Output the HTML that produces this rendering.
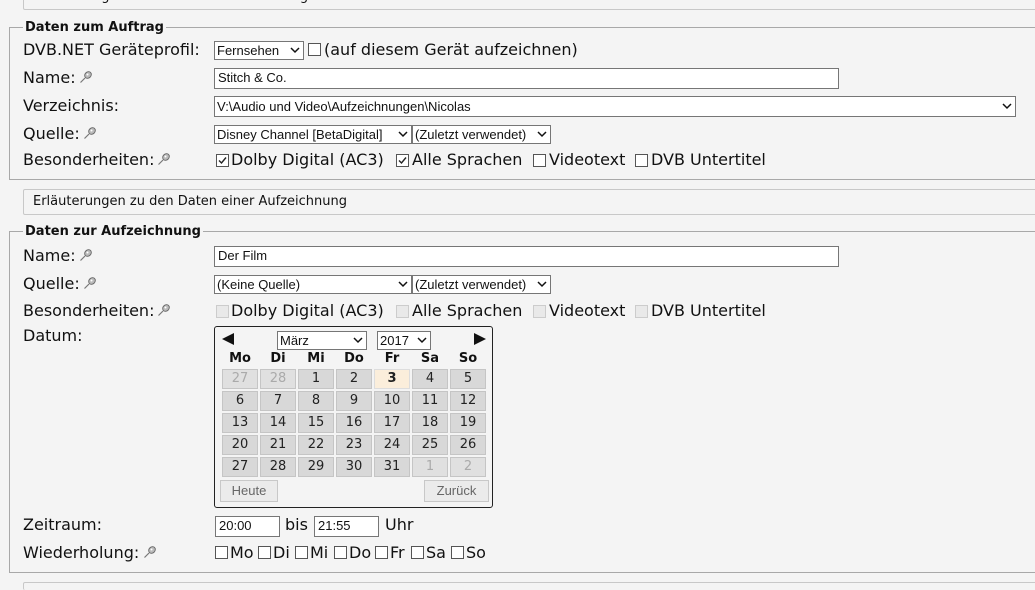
<!DOCTYPE html>
<html style="overflow:hidden;width:1035px;height:590px"><head><meta charset="utf-8"><style>
body{margin:0;width:1035px;height:590px;background:#f4f4f4;font-family:"DejaVu Sans",Verdana,sans-serif;font-size:16px;color:#111;position:relative;overflow:hidden}
.a{position:absolute;white-space:nowrap}
.t{position:absolute;white-space:nowrap;line-height:20px}
.box{position:absolute;border:1px solid #c8c8c8;background:#f4f4f4;border-radius:2px;font-size:13px;line-height:24px;padding-left:9px;box-sizing:border-box}
.fs{position:absolute;border:1px solid #a8a8a8;border-right:none;box-sizing:border-box}
.lg{position:absolute;font-weight:bold;font-size:13px;background:#f4f4f4;padding:0 2px;line-height:16px}
.in{position:absolute;background:#fff;border:1px solid #767676;box-sizing:border-box;font-family:"Liberation Sans",Arial,sans-serif;font-size:13px;line-height:18px;padding-left:3px}
.sel{position:absolute;background:#fff;border:1px solid #767676;box-sizing:border-box;font-family:"Liberation Sans",Arial,sans-serif;font-size:13px;line-height:17px;padding-left:2px;overflow:hidden}
.sel svg{position:absolute;right:3px;top:5px}
.cb{position:absolute;width:11px;height:11px;border:1px solid #555;background:#fff}
.cb.d{border-color:#ccc;background:#e9e9e9}
.cb svg{position:absolute;left:0;top:0}
.pin{position:absolute}
.cell{position:absolute;width:36px;height:20px;box-sizing:border-box;border:1px solid #c5c5c5;background:#d8d8d8;font-size:13px;text-align:center;line-height:18px;color:#222}
.cell.o{color:#aaa;background:#e0e0e0}
.cell.h{background:#fbeedb;border-color:#ddd;font-weight:bold}
.dn{position:absolute;width:36px;text-align:center;font-weight:bold;font-size:13px;line-height:16px}
.btn{position:absolute;height:22px;box-sizing:border-box;border:1px solid #c8c8c8;background:#ebebeb;font-family:"Liberation Sans",Arial,sans-serif;font-size:13px;color:#666;line-height:20px;text-align:center}
</style></head><body>
<svg width="0" height="0" style="position:absolute"><defs>
<symbol id="pin" viewBox="0 0 14 14"><line x1="1.5" y1="12.5" x2="6" y2="8" stroke="#777" stroke-width="1.2"/><ellipse cx="9" cy="5" rx="3.6" ry="3" transform="rotate(-45 9 5)" fill="#bbb" stroke="#666" stroke-width="0.9"/><circle cx="8.5" cy="4.5" r="1" fill="#fff"/></symbol>
<symbol id="chev" viewBox="0 0 10 7"><polyline points="1,1 5,5 9,1" fill="none" stroke="#111" stroke-width="1.5"/></symbol>
<symbol id="chk" viewBox="0 0 11 11"><polyline points="2,5.5 4.5,8 9,2.5" fill="none" stroke="#222" stroke-width="1.4"/></symbol>
</defs></svg>

<div class="box" style="left:23px;top:-16px;width:1020px;height:26px">Erläuterungen zu den Daten eines Auftrags</div>

<div class="fs" style="left:9px;top:27px;width:1030px;height:153px"></div>
<div class="lg" style="left:23px;top:20px">Daten zum Auftrag</div>
<div class="t" style="left:23px;top:40px">DVB.NET Geräteprofil:</div>
<div class="sel" style="left:214px;top:41px;width:90px;height:19px">Fernsehen<svg width="10" height="7"><use href="#chev"/></svg></div>
<div class="cb" style="left:308px;top:43px"></div>
<div class="t" style="left:324px;top:40px">(auf diesem Gerät aufzeichnen)</div>

<div class="t" style="left:23px;top:68px">Name:</div><svg class="pin" style="left:79px;top:70px" width="14" height="14"><use href="#pin"/></svg>
<div class="in" style="left:214px;top:68px;width:625px;height:21px">Stitch &amp; Co.</div>

<div class="t" style="left:23px;top:96px">Verzeichnis:</div>
<div class="sel" style="left:214px;top:96px;width:802px;height:21px;line-height:19px">V:\Audio und Video\Aufzeichnungen\Nicolas<svg width="10" height="7" style="top:6px"><use href="#chev"/></svg></div>

<div class="t" style="left:23px;top:124px">Quelle:</div><svg class="pin" style="left:83px;top:126px" width="14" height="14"><use href="#pin"/></svg>
<div class="sel" style="left:214px;top:125px;width:198px;height:19px">Disney Channel [BetaDigital]<svg width="10" height="7"><use href="#chev"/></svg></div>
<div class="sel" style="left:412px;top:125px;width:139px;height:19px">(Zuletzt verwendet)<svg width="10" height="7"><use href="#chev"/></svg></div>

<div class="t" style="left:23px;top:150px">Besonderheiten:</div><svg class="pin" style="left:157px;top:152px" width="14" height="14"><use href="#pin"/></svg>
<div class="cb" style="left:216px;top:154px"><svg width="11" height="11"><use href="#chk"/></svg></div>
<div class="t" style="left:231px;top:150px">Dolby Digital (AC3)</div>
<div class="cb" style="left:396px;top:154px"><svg width="11" height="11"><use href="#chk"/></svg></div>
<div class="t" style="left:412px;top:150px">Alle Sprachen</div>
<div class="cb" style="left:533px;top:154px"></div>
<div class="t" style="left:549px;top:150px">Videotext</div>
<div class="cb" style="left:635px;top:154px"></div>
<div class="t" style="left:651px;top:150px">DVB Untertitel</div>

<div class="box" style="left:23px;top:189px;width:1020px;height:26px">Erläuterungen zu den Daten einer Aufzeichnung</div>

<div class="fs" style="left:9px;top:231px;width:1030px;height:342px"></div>
<div class="lg" style="left:23px;top:224px">Daten zur Aufzeichnung</div>

<div class="t" style="left:23px;top:246px">Name:</div><svg class="pin" style="left:79px;top:248px" width="14" height="14"><use href="#pin"/></svg>
<div class="in" style="left:214px;top:246px;width:625px;height:21px">Der Film</div>

<div class="t" style="left:23px;top:274px">Quelle:</div><svg class="pin" style="left:83px;top:276px" width="14" height="14"><use href="#pin"/></svg>
<div class="sel" style="left:214px;top:275px;width:198px;height:19px">(Keine Quelle)<svg width="10" height="7"><use href="#chev"/></svg></div>
<div class="sel" style="left:412px;top:275px;width:139px;height:19px">(Zuletzt verwendet)<svg width="10" height="7"><use href="#chev"/></svg></div>

<div class="t" style="left:23px;top:301px">Besonderheiten:</div><svg class="pin" style="left:157px;top:303px" width="14" height="14"><use href="#pin"/></svg>
<div class="cb d" style="left:216px;top:305px"></div>
<div class="t" style="left:231px;top:301px">Dolby Digital (AC3)</div>
<div class="cb d" style="left:396px;top:305px"></div>
<div class="t" style="left:412px;top:301px">Alle Sprachen</div>
<div class="cb d" style="left:533px;top:305px"></div>
<div class="t" style="left:549px;top:301px">Videotext</div>
<div class="cb d" style="left:635px;top:305px"></div>
<div class="t" style="left:651px;top:301px">DVB Untertitel</div>

<div class="t" style="left:23px;top:326px">Datum:</div>

<div class="a" style="left:214px;top:326px;width:279px;height:182px;box-sizing:border-box;border:1px solid #222;border-radius:3px;background:#f4f4f4"></div>
<svg class="a" style="left:221px;top:332px" width="14" height="14"><polygon points="1,7 13,1 13,13" fill="#111"/></svg>
<svg class="a" style="left:473px;top:332px" width="14" height="14"><polygon points="13,7 1,1 1,13" fill="#111"/></svg>
<div class="sel" style="left:277px;top:331px;width:90px;height:19px">März<svg width="10" height="7"><use href="#chev"/></svg></div>
<div class="sel" style="left:377px;top:331px;width:54px;height:19px">2017<svg width="10" height="7"><use href="#chev"/></svg></div>
<div class="dn" style="left:222px;top:351px">Mo</div><div class="dn" style="left:260px;top:351px">Di</div><div class="dn" style="left:298px;top:351px">Mi</div><div class="dn" style="left:336px;top:351px">Do</div><div class="dn" style="left:374px;top:351px">Fr</div><div class="dn" style="left:412px;top:351px">Sa</div><div class="dn" style="left:450px;top:351px">So</div>

<div class="cell o" style="left:222px;top:369px">27</div><div class="cell o" style="left:260px;top:369px">28</div><div class="cell" style="left:298px;top:369px">1</div><div class="cell" style="left:336px;top:369px">2</div><div class="cell h" style="left:374px;top:369px">3</div><div class="cell" style="left:412px;top:369px">4</div><div class="cell" style="left:450px;top:369px">5</div>
<div class="cell" style="left:222px;top:391px">6</div><div class="cell" style="left:260px;top:391px">7</div><div class="cell" style="left:298px;top:391px">8</div><div class="cell" style="left:336px;top:391px">9</div><div class="cell" style="left:374px;top:391px">10</div><div class="cell" style="left:412px;top:391px">11</div><div class="cell" style="left:450px;top:391px">12</div>
<div class="cell" style="left:222px;top:413px">13</div><div class="cell" style="left:260px;top:413px">14</div><div class="cell" style="left:298px;top:413px">15</div><div class="cell" style="left:336px;top:413px">16</div><div class="cell" style="left:374px;top:413px">17</div><div class="cell" style="left:412px;top:413px">18</div><div class="cell" style="left:450px;top:413px">19</div>
<div class="cell" style="left:222px;top:435px">20</div><div class="cell" style="left:260px;top:435px">21</div><div class="cell" style="left:298px;top:435px">22</div><div class="cell" style="left:336px;top:435px">23</div><div class="cell" style="left:374px;top:435px">24</div><div class="cell" style="left:412px;top:435px">25</div><div class="cell" style="left:450px;top:435px">26</div>
<div class="cell" style="left:222px;top:457px">27</div><div class="cell" style="left:260px;top:457px">28</div><div class="cell" style="left:298px;top:457px">29</div><div class="cell" style="left:336px;top:457px">30</div><div class="cell" style="left:374px;top:457px">31</div><div class="cell o" style="left:412px;top:457px">1</div><div class="cell o" style="left:450px;top:457px">2</div>
<div class="btn" style="left:220px;top:480px;width:58px">Heute</div>
<div class="btn" style="left:424px;top:480px;width:65px">Zurück</div>

<div class="t" style="left:23px;top:515px">Zeitraum:</div>
<div class="in" style="left:215px;top:516px;width:65px;height:21px">20:00</div>
<div class="t" style="left:285px;top:515px">bis</div>
<div class="in" style="left:314px;top:516px;width:65px;height:21px">21:55</div>
<div class="t" style="left:385px;top:515px">Uhr</div>

<div class="t" style="left:23px;top:543px">Wiederholung:</div><svg class="pin" style="left:143px;top:545px" width="14" height="14"><use href="#pin"/></svg>
<div class="cb" style="left:215px;top:546px"></div><div class="t" style="left:230px;top:543px">Mo</div>
<div class="cb" style="left:258px;top:546px"></div><div class="t" style="left:273px;top:543px">Di</div>
<div class="cb" style="left:295px;top:546px"></div><div class="t" style="left:310px;top:543px">Mi</div>
<div class="cb" style="left:334px;top:546px"></div><div class="t" style="left:349px;top:543px">Do</div>
<div class="cb" style="left:375px;top:546px"></div><div class="t" style="left:390px;top:543px">Fr</div>
<div class="cb" style="left:411px;top:546px"></div><div class="t" style="left:426px;top:543px">Sa</div>
<div class="cb" style="left:451px;top:546px"></div><div class="t" style="left:466px;top:543px">So</div>

<div class="box" style="left:23px;top:582px;width:1020px;height:8px;border-bottom:none"></div>
</body></html>
